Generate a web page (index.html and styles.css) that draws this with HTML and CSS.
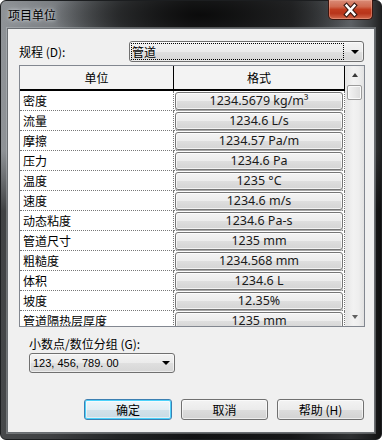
FILE: index.html
```html
<!DOCTYPE html>
<html lang="zh-CN">
<head>
<meta charset="utf-8">
<title>项目单位</title>
<link rel="stylesheet" href="styles.css">
</head>
<body>
<div class="window">
  <div class="titlebar">
    <span class="title">项目单位</span>
    <div class="close">
      <svg width="45" height="20" viewBox="0 0 45 20">
        <path d="M18.5 5.5 L26.5 14.5 M26.5 5.5 L18.5 14.5" stroke="#3a1a14" stroke-width="4.6" stroke-linecap="square" fill="none"/>
        <path d="M18.5 5.5 L26.5 14.5 M26.5 5.5 L18.5 14.5" stroke="#ffffff" stroke-width="2.4" stroke-linecap="square" fill="none"/>
      </svg>
    </div>
  </div>
  <div class="client">
    <div class="row-top">
      <span class="lbl">规程 (D):</span>
      <div class="combo combo-main">
        <span class="focus">管道</span>
        <span class="arrow"></span>
      </div>
    </div>

    <div class="grid">
      <div class="grid-main">
        <div class="thead">
          <div class="th c1">单位</div>
          <div class="th c2">格式</div>
        </div>
        <div class="tbody">
          <div class="tr"><div class="td c1">密度</div><div class="td c2"><div class="cbtn">1234.5679 kg/m³</div></div></div>
          <div class="tr"><div class="td c1">流量</div><div class="td c2"><div class="cbtn">1234.6 L/s</div></div></div>
          <div class="tr"><div class="td c1">摩擦</div><div class="td c2"><div class="cbtn">1234.57 Pa/m</div></div></div>
          <div class="tr"><div class="td c1">压力</div><div class="td c2"><div class="cbtn">1234.6 Pa</div></div></div>
          <div class="tr"><div class="td c1">温度</div><div class="td c2"><div class="cbtn">1235 °C</div></div></div>
          <div class="tr"><div class="td c1">速度</div><div class="td c2"><div class="cbtn">1234.6 m/s</div></div></div>
          <div class="tr"><div class="td c1">动态粘度</div><div class="td c2"><div class="cbtn">1234.6 Pa-s</div></div></div>
          <div class="tr"><div class="td c1">管道尺寸</div><div class="td c2"><div class="cbtn">1235 mm</div></div></div>
          <div class="tr"><div class="td c1">粗糙度</div><div class="td c2"><div class="cbtn">1234.568 mm</div></div></div>
          <div class="tr"><div class="td c1">体积</div><div class="td c2"><div class="cbtn">1234.6 L</div></div></div>
          <div class="tr"><div class="td c1">坡度</div><div class="td c2"><div class="cbtn">12.35%</div></div></div>
          <div class="tr"><div class="td c1">管道隔热层厚度</div><div class="td c2"><div class="cbtn">1235 mm</div></div></div>
        </div>
      </div>
      <div class="vscroll">
        <div class="sb-btn"><span class="tri-up"></span></div>
        <div class="sb-thumb"></div>
        <div class="sb-space"></div>
        <div class="sb-btn"><span class="tri-down"></span></div>
      </div>
    </div>

    <div class="lbl2">小数点/数位分组 (G):</div>
    <div class="combo combo-dec">
      <span class="dec-text">123, 456, 789. 00</span>
      <span class="arrow"></span>
    </div>

    <div class="buttons">
      <div class="btn default">确定</div>
      <div class="btn">取消</div>
      <div class="btn">帮助 (H)</div>
    </div>
  </div>
</div>
</body>
</html>
```

FILE: styles.css
```css
html {
  background: #ffffff;
}
body {
  margin: 0;
  width: 382px;
  height: 440px;
  overflow: hidden;
  font-family: "Noto Sans CJK SC", "Noto Sans", sans-serif;
  font-size: 12px;
  color: #000;
}
.window {
  box-sizing: border-box;
  width: 382px;
  height: 440px;
  border: 1px solid #1c1e20;
  border-radius: 6px;
  display: flex;
  flex-direction: column;
  background:
    radial-gradient(ellipse 150px 40px at 200px 14px, rgba(8,8,8,0.9) 0%, rgba(20,20,20,0.6) 55%, rgba(20,20,20,0) 100%),
    linear-gradient(180deg, rgba(0,0,0,0) 0px, rgba(0,0,0,0) 150px, rgba(0,0,0,0.55) 210px, rgba(0,0,0,0.5) 440px),
    linear-gradient(90deg, #8f9397 0px, #7c8084 50px, #43474a 120px, #232527 190px, #2b2d2f 290px, #5c6064 350px, #3a3c3e 370px, #1c1c1c 382px);
}
.titlebar {
  height: 27px;
  flex: none;
  display: flex;
  justify-content: space-between;
  align-items: flex-start;
}
.title {
  margin: 6px 0 0 7px;
  line-height: 16px;
  font-size: 12px;
  color: #000;
  text-shadow: 0 0 6px rgba(220,225,230,0.9), 0 0 3px rgba(220,225,230,0.9);
}
.close {
  width: 45px;
  height: 20px;
  margin: -1px 8px 0 0;
  box-sizing: border-box;
  border: 1px solid #3b1610;
  border-top: none;
  border-radius: 0 0 5px 5px;
  background: linear-gradient(180deg, #d98b77 0%, #cf6a50 35%, #c13c1f 50%, #b8341a 70%, #d2684c 100%);
  box-shadow: inset 0 0 0 1px rgba(255,200,180,0.35);
  overflow: hidden;
}
.close svg {
  display: block;
  margin: 0 0 0 -1px;
}
.client {
  flex: 1;
  margin: 0 6px 6px 6px;
  border: 1px solid #6a6e72;
  background: #f0f0f0;
  display: flex;
  flex-direction: column;
  box-shadow: 0 0 0 1px rgba(200,205,210,0.35);
}
.row-top {
  display: flex;
  align-items: center;
  justify-content: space-between;
  margin: 12px 10px 0 11px;
  height: 21px;
}
.lbl {
  line-height: 16px;
}
.combo {
  box-sizing: border-box;
  border: 1px solid #707070;
  border-radius: 3px;
  background: linear-gradient(180deg, #f3f3f3 0%, #ebebeb 50%, #dfdfdf 51%, #d6d6d6 100%);
  box-shadow: inset 0 0 0 1px rgba(255,255,255,0.55);
  display: flex;
  align-items: center;
  justify-content: space-between;
}
.combo-main {
  width: 235px;
  height: 21px;
  padding: 0 4px 0 1px;
}
.focus {
  box-sizing: border-box;
  width: 213px;
  height: 17px;
  border: 1px dotted #000;
  line-height: 15px;
  padding-left: 0;
}
.arrow {
  width: 0;
  height: 0;
  border-left: 4px solid transparent;
  border-right: 4px solid transparent;
  border-top: 4px solid #000;
}
.grid {
  box-sizing: border-box;
  width: 346px;
  height: 262px;
  margin: 3px 0 0 11px;
  border: 1px solid #828790;
  background: #ffffff;
  display: flex;
}
.grid-main {
  width: 325px;
  display: flex;
  flex-direction: column;
}
.thead {
  display: flex;
  height: 25px;
  box-sizing: border-box;
  border-bottom: 2px solid #000;
  background: #f3f3f3;
  flex: none;
}
.th {
  box-sizing: border-box;
  height: 23px;
  line-height: 23px;
  text-align: center;
  border-right: 1px solid #000;
}
.c1 {
  width: 154px;
}
.c2 {
  width: 171px;
}
.tbody {
  height: 235px;
  overflow: hidden;
}
.tr {
  display: flex;
  height: 20px;
}
.td {
  box-sizing: border-box;
  height: 20px;
  border-right: 1px dotted #777;
  border-bottom: 1px dotted #777;
}
.td.c1 {
  padding-left: 3px;
  line-height: 19px;
  white-space: nowrap;
}
.td.c2 {
  padding: 1px 1px 0 1px;
}
.cbtn {
  box-sizing: border-box;
  height: 18px;
  border: 1px solid #767676;
  border-radius: 3px;
  background: linear-gradient(180deg, #f4f4f4 0%, #ececec 50%, #dedede 51%, #d4d4d4 100%);
  box-shadow: inset 0 0 0 1px rgba(255,255,255,0.7), 0 1px 0 #a8a8a8;
  font-family: "Noto Sans", sans-serif;
  font-size: 12.5px;
  line-height: 16px;
  text-align: center;
  color: #1a1a1a;
  white-space: nowrap;
}
.vscroll {
  width: 19px;
  display: flex;
  flex-direction: column;
  background: linear-gradient(90deg, #e6e6e6 0%, #f2f2f2 40%, #eeeeee 70%, #e2e2e2 100%);
  border-left: 1px solid #e9e9e9;
  box-sizing: border-box;
}
.sb-btn {
  height: 18px;
  flex: none;
  display: flex;
  align-items: center;
  justify-content: center;
}
.tri-up {
  width: 0;
  height: 0;
  border-left: 3.5px solid transparent;
  border-right: 3.5px solid transparent;
  border-bottom: 4px solid #3a3a3a;
}
.tri-down {
  width: 0;
  height: 0;
  border-left: 3.5px solid transparent;
  border-right: 3.5px solid transparent;
  border-top: 4px solid #606060;
}
.sb-thumb {
  height: 15px;
  margin: 1px 2px 0 1px;
  box-sizing: border-box;
  border: 1px solid #9c9c9c;
  border-radius: 2px;
  background: linear-gradient(90deg, #f4f4f4 0%, #e8e8e8 50%, #dcdcdc 100%);
  box-shadow: inset 0 0 0 1px #fafafa;
}
.sb-space {
  flex: 1;
}
.lbl2 {
  margin: 9px 0 0 21px;
  line-height: 16px;
}
.combo-dec {
  width: 146px;
  height: 20px;
  margin: 1px 0 0 21px;
  padding: 0 4px 0 3px;
}
.dec-text {
  font-family: "Liberation Sans", sans-serif;
  font-size: 11px;
  line-height: 16px;
  color: #000;
}
.buttons {
  display: flex;
  justify-content: flex-end;
  gap: 9px;
  margin: 26px 10px 0 0;
}
.btn {
  box-sizing: border-box;
  width: 87px;
  height: 21px;
  border: 1px solid #707070;
  border-radius: 3px;
  background: linear-gradient(180deg, #f3f3f3 0%, #ebebeb 50%, #dddddd 51%, #d2d2d2 100%);
  box-shadow: inset 0 0 0 1px rgba(255,255,255,0.6);
  text-align: center;
  line-height: 19px;
}
.btn.default {
  width: 88px;
  border-color: #3c7fb1;
  background: linear-gradient(180deg, #eef6fa 0%, #e2eef4 50%, #d2e2ea 51%, #c8dae4 100%);
  box-shadow: inset 0 0 0 1px #4cd2fb, inset 0 0 0 2px rgba(255,255,255,0.5);
}
```
